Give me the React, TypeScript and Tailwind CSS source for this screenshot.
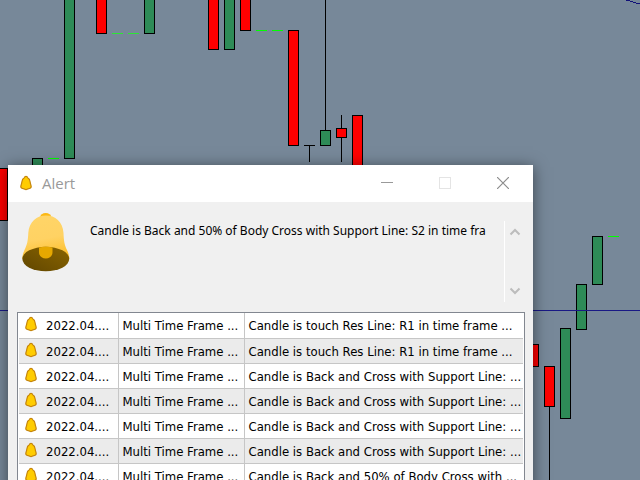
type Candle = { x: number; top: number; bottom: number; up?: boolean; wick?: [number, number] };

const candles: Candle[] = [
  { x: -3, top: 168, bottom: 221 },
  { x: 32, top: 158, bottom: 190, up: true },
  { x: 64, top: -9, bottom: 159, up: true },
  { x: 96, top: -9, bottom: 34 },
  { x: 144, top: -9, bottom: 34, up: true },
  { x: 208, top: -9, bottom: 50 },
  { x: 224, top: -9, bottom: 50, up: true },
  { x: 240, top: -9, bottom: 31 },
  { x: 288, top: 30, bottom: 146 },
  { x: 304, top: 145, bottom: 146, wick: [145, 162] },
  { x: 320, top: 130, bottom: 146, up: true, wick: [0, 130] },
  { x: 336, top: 128, bottom: 138, wick: [115, 162] },
  { x: 352, top: 115, bottom: 190 },
  { x: 528, top: 344, bottom: 367 },
  { x: 544, top: 366, bottom: 407, wick: [366, 2000] },
  { x: 560, top: 328, bottom: 419, up: true },
  { x: 576, top: 284, bottom: 330, up: true },
  { x: 592, top: 236, bottom: 285, up: true },
];

const flats = [
  { x: 48, y: 158, color: "#00ff00" },
  { x: 112, y: 33, color: "#2be634" },
  { x: 128, y: 33, color: "#2be634" },
  { x: 256, y: 30, color: "#00ff00" },
  { x: 272, y: 30, color: "#00ff00" },
  { x: 608, y: 236, color: "#00ff00" },
];

const messages = [
  "Candle is touch Res Line: R1 in time frame ...",
  "Candle is touch Res Line: R1 in time frame ...",
  "Candle is Back and Cross with Support Line: ...",
  "Candle is Back and Cross with Support Line: ...",
  "Candle is Back and Cross with Support Line: ...",
  "Candle is Back and Cross with Support Line: ...",
  "Candle is Back and 50% of Body Cross with ...",
];

function Chart() {
  return (
    <svg className="absolute inset-0 h-full w-full" shapeRendering="crispEdges" aria-hidden="true">
      {candles.map((c) => (
        <g key={c.x}>
          {c.wick && <rect x={c.x + 5} y={c.wick[0]} width="1" height={c.wick[1] - c.wick[0]} fill="#000" />}
          <rect x={c.x} y={c.top} width="11" height={c.bottom - c.top} fill="#000" />
          {c.bottom - c.top > 2 && (
            <rect x={c.x + 1} y={c.top + 1} width="9" height={c.bottom - c.top - 2} fill={c.up ? "#2e8b57" : "#ff0000"} />
          )}
        </g>
      ))}
      {flats.map((f) => (
        <rect key={f.x} x={f.x} y={f.y} width="11" height="1" fill={f.color} />
      ))}
      <rect x="0" y="310" width="100%" height="1" fill="#191985" />
      <path d="M626 0h4v1h3v1h3v1h4v1h-4v-1h-3v-1h-3v-1h-4z" fill="#101078" />
    </svg>
  );
}

function SmallBell() {
  return (
    <svg className="block h-4 w-3 shrink-0" viewBox="0 0 12 16" aria-hidden="true">
      <path
        d="M6 1.4C5 1.4 4.500 2 4.300 2.700C2.500 3.600 2 5.300 1.800 7.200C1.600 9.200 .8 10.300 .8 11.800C.8 13.300 2.600 13.700 4 13.800C4.600 14.800 7.400 14.800 8 13.800C9.400 13.700 11.200 13.300 11.200 11.800C11.200 10.300 10.400 9.200 10.200 7.200C10 5.300 9.500 3.600 7.700 2.700C7.500 2 7 1.4 6 1.4Z"
        fill="#fc0"
        stroke="#c5850c"
        strokeWidth="1.2"
      />
    </svg>
  );
}

function LargeBell() {
  return (
    <svg className="block h-[60px] w-12 shrink-0" viewBox="0 0 48 60" aria-hidden="true">
      <defs>
        <linearGradient id="bellBody" x1="0" y1="0" x2="0.2" y2="1">
          <stop offset="0" stopColor="#ffd568" />
          <stop offset="0.6" stopColor="#ffd263" />
          <stop offset="1" stopColor="#fdc132" />
        </linearGradient>
        <linearGradient id="bellMouth" x1="1" y1="0" x2="0" y2="1">
          <stop offset="0" stopColor="#8a6500" />
          <stop offset="1" stopColor="#614600" />
        </linearGradient>
      </defs>
      <ellipse cx="23.700" cy="5" rx="5.500" ry="4" fill="#fcb813" />
      <path
        d="M24 3.500C15 3.500 7 9.500 6.300 21C6 29 5 33 2.500 38C1 41 .3 44 .3 47H47.300C47.300 44 46.500 41 45 38C42.500 33 41.800 29 41.500 21C40.900 9.500 33 3.500 24 3.500Z"
        fill="url(#bellBody)"
      />
      <ellipse cx="23.800" cy="47" rx="23.400" ry="12.300" fill="url(#bellMouth)" />
      <path d="M17 35.500C20.500 34.500 27 34.500 30.500 35.500V40C30.500 44 27.600 46.500 23.800 46.500S17 44 17 40Z" fill="#e6a800" />
    </svg>
  );
}

function Chevron({ down }: { down?: boolean }) {
  return (
    <svg className="block h-2 w-3" viewBox="0 0 12 8" fill="none" stroke="#bcbcbc" strokeWidth="2" aria-hidden="true">
      <path d={down ? "M1.500 1.500L6 6L10.500 1.500" : "M1.500 6.500L6 2L10.500 6.500"} />
    </svg>
  );
}

const captionButton = "flex h-full w-[58px] items-center justify-center";

export default function App() {
  return (
    <main className="relative h-screen w-full overflow-hidden bg-[#778899] font-['DejaVu_Sans_Condensed','DejaVu_Sans',sans-serif] text-[13px] leading-4 text-black">
      <Chart />
      <section
        aria-labelledby="alert-title"
        className="absolute top-[165px] left-2 w-[525px] bg-[#f0f0f0] shadow-[0_2px_14px_rgba(0,0,0,0.5)]"
      >
        <header className="flex h-[37px] items-center bg-white pb-px pl-3">
          <SmallBell />
          <h1 id="alert-title" className="ml-[10px] flex-1 font-['Open_Sans',sans-serif] text-[15px] text-[#999999]">
            Alert
          </h1>
          <div className="flex h-full pr-px">
            <button type="button" aria-label="Minimize" className={captionButton}>
              <svg className="h-3 w-3" viewBox="0 0 12 12" shapeRendering="crispEdges" aria-hidden="true">
                <rect y="5" width="12" height="1" fill="#999" />
              </svg>
            </button>
            <button type="button" aria-label="Maximize" disabled className={captionButton}>
              <svg className="h-3 w-3" viewBox="0 0 12 12" fill="none" stroke="#e4e4e4" aria-hidden="true">
                <rect x="0.500" y="0.500" width="11" height="11" />
              </svg>
            </button>
            <button type="button" aria-label="Close" className={captionButton}>
              <svg className="h-3 w-3" viewBox="0 0 12 12" stroke="#8c8c8c" strokeWidth="1.200" aria-hidden="true">
                <path d="M0 0L12 12M12 0L0 12" />
              </svg>
            </button>
          </div>
        </header>

        <div className="flex items-start pt-[10px] pr-[9px] pl-[14px]">
          <LargeBell />
          <textarea
            readOnly
            wrap="off"
            aria-label="Alert message"
            className="mt-[11px] ml-5 block h-20 min-w-0 flex-1 resize-none overflow-hidden bg-transparent font-['Noto_Sans',sans-serif] text-xs leading-4 outline-none"
            value="Candle is Back and 50% of Body Cross with Support Line: S2 in time fra"
          />
          <div className="mt-[9px] ml-1 flex h-[81px] w-5 flex-col items-center justify-between border-l border-white py-[7px]">
            <button type="button" aria-label="Scroll up">
              <Chevron />
            </button>
            <button type="button" aria-label="Scroll down">
              <Chevron down />
            </button>
          </div>
        </div>

        <div className="mt-[9px] mr-2 ml-[9px] border border-[#828790] bg-white p-px pt-0">
          <table className="w-full table-fixed border-collapse">
            <colgroup>
              <col className="w-[99px]" />
              <col className="w-[126px]" />
              <col />
            </colgroup>
            <tbody>
              {messages.map((message, i) => (
                <tr key={i} className="h-[25px] even:bg-[#ebebeb]">
                  <td className="border-r border-b border-[#c6c6c6] p-0">
                    <div className="flex items-start pl-[6px]">
                      <SmallBell />
                      <span className="ml-[9px] pt-[2px] whitespace-nowrap">2022.04....</span>
                    </div>
                  </td>
                  <td className="border-r border-b border-[#c6c6c6] p-0 pt-[2px] pl-1 whitespace-nowrap">Multi Time Frame ...</td>
                  <td className="border-b border-[#c6c6c6] p-0 pt-[2px] pl-1 whitespace-nowrap">{message}</td>
                </tr>
              ))}
            </tbody>
          </table>
        </div>
      </section>
    </main>
  );
}
